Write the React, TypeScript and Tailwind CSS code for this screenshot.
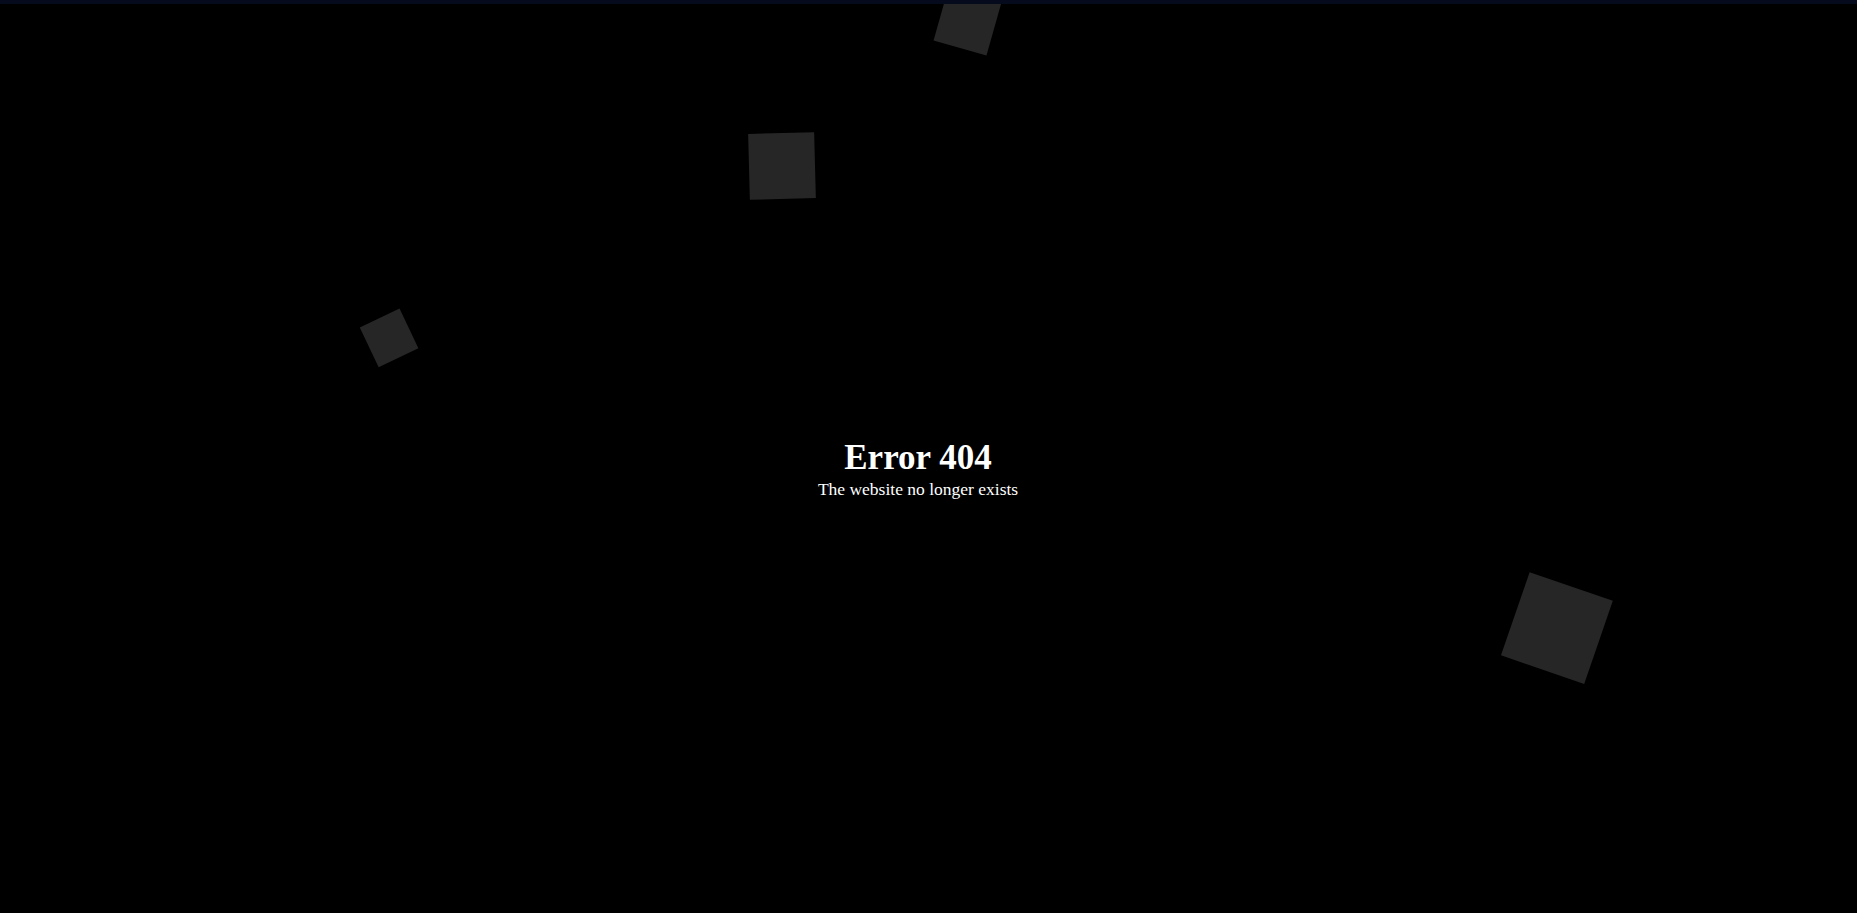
import React from "react";

interface Square {
  cx: number;
  cy: number;
  size: number;
  rotate: number;
}

// floating squares, page coords of the centre (y is relative to the area under the top bar)
const squares: Square[] = [
  { cx: 967, cy: 17, size: 55, rotate: 15.8 },
  { cx: 782, cy: 162, size: 66, rotate: -1.5 },
  { cx: 389, cy: 334, size: 43.5, rotate: -25.4 },
  { cx: 1556.5, cy: 624, size: 87.5, rotate: 19 },
];

export default function App() {
  return (
    <div className="w-full h-[913px] bg-black overflow-hidden font-['Liberation_Serif',_'Times_New_Roman',_serif]">
      {/* top strip */}
      <div className="h-[4px] bg-[#050a1c]" />

      <div className="relative h-[909px] overflow-hidden flex items-center justify-center pt-[20px] pr-[21px]">
        {squares.map((s, i) => (
          <div
            key={i}
            className="absolute bg-[#262626]"
            style={{
              left: s.cx - s.size / 2,
              top: s.cy - s.size / 2,
              width: s.size,
              height: s.size,
              transform: `rotate(${s.rotate}deg)`,
            }}
          />
        ))}

        <div className="relative text-center text-white">
          <h1 className="text-[35px] leading-[40px] font-bold">Error 404</h1>
          <p className="text-[17.5px] leading-[20px] mt-[1px]">
            The website no longer exists
          </p>
        </div>
      </div>
    </div>
  );
}
